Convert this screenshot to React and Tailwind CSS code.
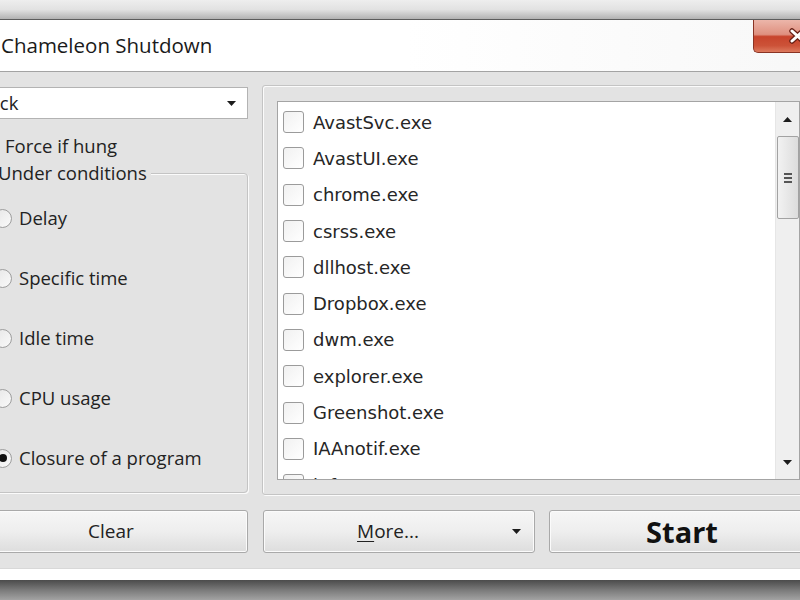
import React from 'react';

const PROCESSES = [
  'AvastSvc.exe', 'AvastUI.exe', 'chrome.exe', 'csrss.exe', 'dllhost.exe',
  'Dropbox.exe', 'dwm.exe', 'explorer.exe', 'Greenshot.exe', 'IAAnotif.exe', 'igfxpers.exe'
];
const CONDITIONS = ['Delay', 'Specific time', 'Idle time', 'CPU usage', 'Closure of a program'];

function Tri({ up = false, className = '' }) {
  return (
    <svg width="9" height="5" viewBox="0 0 9 5" className={className}>
      <polygon points={up ? '0,5 9,5 4.5,0' : '0,0 9,0 4.5,5'} fill="#1c1c1c" />
    </svg>
  );
}

function Btn({ className = '', children }) {
  return (
    <button className={`flex items-center h-full rounded-[3px] border border-[#a9a9a9] bg-gradient-to-b from-[#f6f6f6] via-[#eeeeee] to-[#dddddd] shadow-[inset_0_0_0_1px_#fbfbfb] text-[19px] text-[#222] ${className}`}>
      {children}
    </button>
  );
}

function CloseButton() {
  return (
    <div className="ml-auto w-[87px] h-[33px] rounded-bl-[5px] border-l border-b border-[#8a3324] bg-[linear-gradient(to_bottom,#ecb6aa_0%,#df907f_45%,#c8442c_52%,#cc5238_80%,#dd7a5e_100%)] flex items-center justify-center">
      <svg width="17" height="16" viewBox="0 0 17 16">
        <path d="M3 3 L14 13 M14 3 L3 13" stroke="#6a2116" strokeWidth="5.5" strokeLinecap="round" />
        <path d="M3 3 L14 13 M14 3 L3 13" stroke="#ffffff" strokeWidth="3" strokeLinecap="round" />
      </svg>
    </div>
  );
}

function Radio({ label, checked }) {
  return (
    <div className="h-[30px] flex items-center gap-[7px]">
      <span className="w-[19px] h-[19px] rounded-full border border-[#9d9d9d] bg-gradient-to-br from-[#e6e6e6] to-[#fafafa] flex items-center justify-center">
        {checked && <span className="w-[8px] h-[8px] rounded-full bg-[#111]" />}
      </span>
      <span>{label}</span>
    </div>
  );
}

function ProcessList() {
  return (
    <div className="h-full flex bg-white border border-[#a4a4a4] overflow-hidden">
      <div className="flex-1 flex flex-col pl-[5px] pt-[2px] overflow-hidden font-['DejaVu_Sans',sans-serif] text-[18px] text-[#262626]">
        {PROCESSES.map(p => (
          <div key={p} className="h-[36.3px] shrink-0 flex items-center gap-[9px]">
            <span className="w-[21px] h-[22px] shrink-0 rounded-[3px] border border-[#9b9b9b] bg-gradient-to-br from-[#f1f1f1] to-white" />
            <span>{p}</span>
          </div>
        ))}
      </div>
      <div className="w-[24px] flex flex-col bg-[#efefef] border-l border-[#e6e6e6]">
        <div className="h-[34px] flex items-center justify-center"><Tri up /></div>
        <div className="h-[83px] ml-[1px] rounded-[2px] border border-[#a2a2a2] bg-gradient-to-r from-[#f2f2f2] to-[#dcdcdc] flex flex-col items-center justify-center gap-[2px]">
          <span className="w-[8px] h-[2px] bg-[#555]" />
          <span className="w-[8px] h-[2px] bg-[#555]" />
          <span className="w-[8px] h-[2px] bg-[#555]" />
        </div>
        <div className="flex-1" />
        <div className="h-[34px] flex items-center justify-center"><Tri /></div>
      </div>
    </div>
  );
}

export default function App() {
  return (
    <div className="w-[800px] h-[600px] overflow-hidden flex flex-col font-['Open_Sans','Noto_Sans',sans-serif] text-[#222]">
      <div className="-ml-[26px] w-[866px] flex-1 flex flex-col">
        <div className="h-[20px] shrink-0 bg-gradient-to-b from-[#eeeeee] via-[#e2e2e2] to-[#b2b2b2] border-b border-[#5c5c5c]" />

        <div className="h-[52px] shrink-0 flex items-start bg-gradient-to-r from-white via-white to-[#f7f7f7] border-b border-[#a3a3a3]">
          <div className="self-center pl-[27px] text-[20.5px] leading-none text-[#1a1a1a]">Chameleon Shutdown</div>
          <CloseButton />
        </div>

        <div className="shrink-0 flex flex-col pt-[13px] pb-[15px] pr-[25px] bg-[#e3e3e3] text-[19px]">
          <div className="h-[410px] flex gap-[14px]">
            <div className="w-[274px] flex flex-col pt-[2px] text-[18.5px]">
              <div className="h-[32px] flex items-center bg-white border border-[#b3b3b3] pl-[4px] pr-[11px]">
                <span className="flex-1">Lock</span>
                <Tri />
              </div>
              <div className="mt-[17px] h-[20px] flex items-center gap-[5px] pl-[6px]">
                <span className="w-[20px] h-[20px] rounded-[3px] border border-[#9d9d9d] bg-white" />
                <span>Force if hung</span>
              </div>
              <div className="mt-[17px] ml-[12px] h-[320px] flex flex-col rounded-[4px] border border-[#c4c4c4] shadow-[inset_1px_1px_0_#fbfbfb,1px_1px_0_#fbfbfb] pl-[6px]">
                <div className="-mt-[14px] ml-[1px] self-start h-[26px] leading-[26px] px-[4px] bg-[#e3e3e3]">Under conditions</div>
                <div className="mt-[17px] flex flex-col gap-[30px]">
                  {CONDITIONS.map((c, i) => (
                    <Radio key={c} label={c} checked={i === CONDITIONS.length - 1} />
                  ))}
                </div>
              </div>
            </div>

            <div className="flex-1 rounded-[3px] border border-[#c4c4c4] shadow-[inset_1px_1px_0_#fbfbfb,1px_1px_0_#fbfbfb] pt-[15px] pl-[14px] pr-[14px] pb-[14px]">
              <ProcessList />
            </div>
          </div>

          <div className="mt-[15px] h-[43px] flex">
            <Btn className="w-[274px] justify-center">Clear</Btn>
            <Btn className="ml-[15px] w-[272px]">
              <span className="flex-1 text-center"><u className="underline-offset-[3px]">M</u>ore...</span>
              <Tri className="mr-[13px]" />
            </Btn>
            <Btn className="ml-[14px] flex-1 justify-center">
              <span className="text-[29px] font-bold text-[#111]">Start</span>
            </Btn>
          </div>
        </div>

        <div className="h-[12px] shrink-0 bg-white border-t border-[#d8d8d8]" />
        <div className="flex-1 bg-gradient-to-b from-[#4b4b4b] via-[#7a7a7a] to-[#a3a3a3]" />
      </div>
    </div>
  );
}
